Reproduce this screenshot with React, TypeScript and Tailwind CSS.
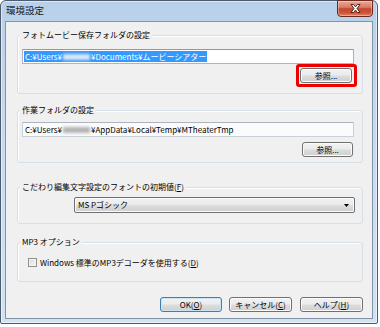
import type { ReactNode } from 'react';

function WinButton({ children, primary = false, className = '' }: { children: ReactNode; primary?: boolean; className?: string }) {
  return (
    <button
      className={`h-[15px] rounded-[3px] border ${primary ? 'border-[#3c7fb1] shadow-[inset_0_0_0_1px_#c9e6f7]' : 'border-[#707070] shadow-[inset_0_0_0_1px_#fbfbfb]'} bg-[linear-gradient(180deg,#f2f2f2_0%,#ebebeb_48%,#dddddd_52%,#cfcfcf_100%)] flex items-center justify-center text-[8px] leading-none text-black ${className}`}
    >
      {children}
    </button>
  );
}

function Group({ title, children, className = '' }: { title: ReactNode; children: ReactNode; className?: string }) {
  return (
    <fieldset className={`border border-[#d5dfe5] rounded-[3px] shadow-[inset_1px_1px_0_#fff] pl-[4px] pr-[8px] ${className}`}>
      <legend className="ml-[-2px] px-[2px] bg-[#f0f0f0] text-[8px] leading-[10px] text-black">{title}</legend>
      {children}
    </fieldset>
  );
}

function Blurred({ selected }: { selected?: boolean }) {
  return (
    <span
      className={`inline-block w-[27px] h-[6px] mx-[1px] align-middle blur-[1.5px] ${selected ? 'bg-[#dfe8f4]' : 'bg-[#b4b4b4]'}`}
    />
  );
}

function CloseButton() {
  return (
    <div className="w-[36px] h-[17px] -mt-px rounded-b-[4px] border border-[#6b2a20] bg-[linear-gradient(180deg,#eaa898_0%,#db7a66_42%,#c5462e_52%,#cc5437_78%,#df8466_100%)] shadow-[inset_0_0_0_1px_rgba(255,255,255,0.35)] flex items-center justify-center">
      <svg width="11" height="9" viewBox="0 0 11 9">
        <path
          d="M1 0.5H3.6L5.5 2.9L7.4 0.5H10L7 4.5L10 8.5H7.4L5.5 6.1L3.6 8.5H1L4 4.5Z"
          fill="#ffffff"
          stroke="#3b1a14"
          strokeWidth="0.9"
          strokeLinejoin="round"
        />
      </svg>
    </div>
  );
}

export default function App() {
  return (
    <div className="w-[380px] h-[327px] bg-white font-['Noto_Sans_CJK_JP',sans-serif] text-black">
      <div className="w-[378px] h-[324px] rounded-t-[6px] rounded-b-[2px] border border-[#4d5b6e] bg-[linear-gradient(180deg,#b8d0ea_0%,#c6daef_35%,#d2e2f3_100%)] shadow-[inset_0_0_0_1px_rgba(255,255,255,0.5)] px-[4px] pb-[4px] flex flex-col">
        <div className="h-[20px] flex justify-between items-start">
          <span className="pl-[1px] pt-[4px] text-[9.5px] leading-[11px] text-[#1a1a1a]">環境設定</span>
          <CloseButton />
        </div>

        <div className="flex-1 border border-[#8393a8] bg-[#f0f0f0] pl-[11px] pr-[9px] pt-[8px] flex flex-col">
          <Group title="フォトムービー保存フォルダの設定" className="pt-[9px] pb-[6px]">
            <div className="h-[15px] border border-[#abb4c0] border-t-[#8f9aa8] bg-white flex items-center pl-[1px]">
              <span className="bg-[#3399ff] text-white text-[8px] leading-[11px] px-[1px] flex items-center">
                C:¥Users¥<Blurred selected />¥Documents¥ムービーシアター
              </span>
            </div>
            <div className="flex justify-end">
              <div className="mr-[-3px] border-[3px] border-[#ee0000] rounded-[3px] pl-[1px] pr-[2px] py-[1px]">
                <WinButton className="w-[52px]">参照...</WinButton>
              </div>
            </div>
          </Group>

          <Group title="作業フォルダの設定" className="mt-[11px] pt-[7px] pb-[5px]">
            <div className="h-[15px] border border-[#c9d0d8] border-t-[#abb4c0] bg-[#fbfbfb] flex items-center pl-[2px]">
              <span className="text-[8px] leading-[11px] flex items-center">
                C:¥Users¥<Blurred /> ¥AppData¥Local¥Temp¥MTheaterTmp
              </span>
            </div>
            <div className="flex justify-end mt-[5px]">
              <WinButton className="w-[51px] mr-[1px]">参照...</WinButton>
            </div>
          </Group>

          <Group
            title={
              <>
                こだわり編集文字設定のフォントの初期値(<span className="underline">F</span>)
              </>
            }
            className="mt-[19px] pt-[5px] pb-[10px]"
          >
            <div className="ml-[52px] mr-[-1px] h-[16px] rounded-[2px] border border-[#707070] bg-[linear-gradient(180deg,#f2f2f2_0%,#ebebeb_48%,#dddddd_52%,#cfcfcf_100%)] shadow-[inset_0_0_0_1px_#fbfbfb] flex items-center justify-between pl-[3px] pr-[5px]">
              <span className="text-[8px] leading-none">MS Pゴシック</span>
              <svg width="5" height="3" viewBox="0 0 5 3">
                <path d="M0 0H5L2.5 3Z" fill="#000" />
              </svg>
            </div>
          </Group>

          <Group title="MP3 オプション" className="mt-[13px] pt-[10px] pb-[13px]">
            <div className="h-[11px] flex items-center ml-[6px] gap-[3px]">
              <span className="w-[9px] h-[9px] border border-[#8e8f8f] bg-[linear-gradient(135deg,#d8d8d8,#f8f8f8)] shadow-[inset_0_0_0_1px_#f4f4f4]" />
              <span className="text-[8px] leading-none">
                Windows 標準のMP3デコーダを使用する(<span className="underline">D</span>)
              </span>
            </div>
          </Group>

          <div className="mt-[15px] flex justify-end">
            <WinButton primary className="w-[62px]">
              OK(<span className="underline">O</span>)
            </WinButton>
            <WinButton className="w-[63px] ml-[7px]">
              キャンセル(<span className="underline">C</span>)
            </WinButton>
            <WinButton className="w-[63px] ml-[8px]">
              ヘルプ(<span className="underline">H</span>)
            </WinButton>
          </div>
        </div>
      </div>
    </div>
  );
}
